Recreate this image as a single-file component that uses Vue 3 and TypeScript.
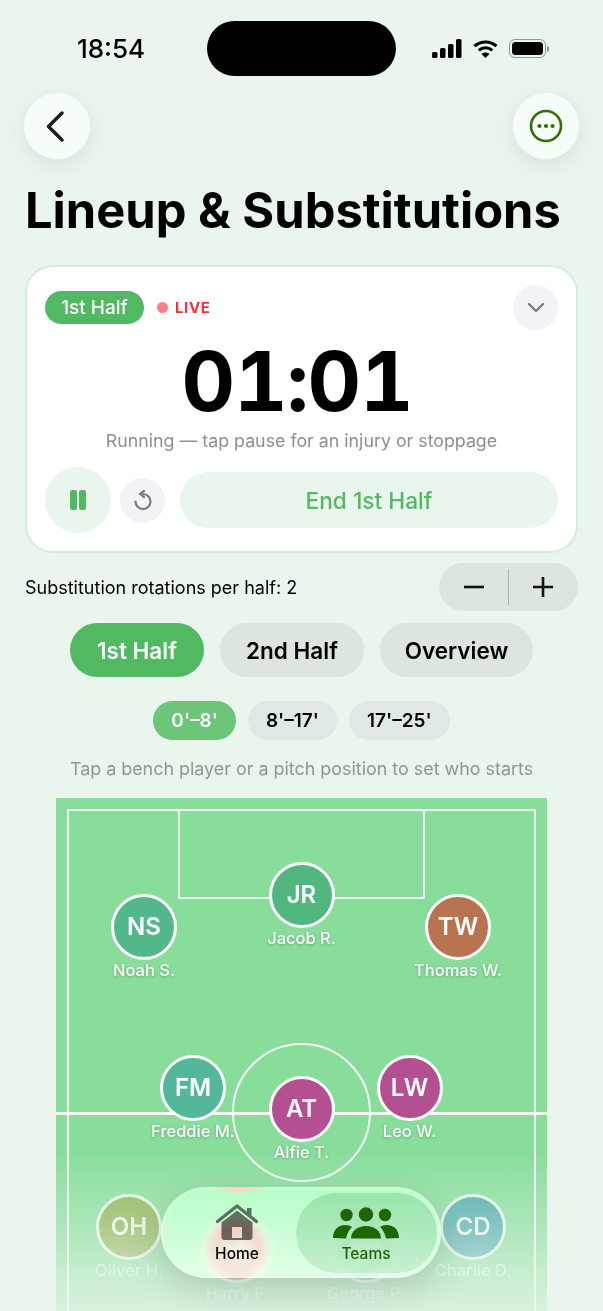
<script setup lang="ts">
interface Player {
  initials: string
  name: string
  x: number
  y: number
  color: string
  faded?: boolean
}

// positions are relative to the pitch, it's a free canvas
const players: Player[] = [
  { initials: 'JR', name: 'Jacob R.', x: 245.5, y: 97, color: '#52b77f' },
  { initials: 'NS', name: 'Noah S.', x: 88, y: 129, color: '#52b78a' },
  { initials: 'TW', name: 'Thomas W.', x: 402, y: 129, color: '#b87350' },
  { initials: 'FM', name: 'Freddie M.', x: 137, y: 290, color: '#52b899' },
  { initials: 'LW', name: 'Leo W.', x: 353.5, y: 290, color: '#b45091' },
  { initials: 'AT', name: 'Alfie T.', x: 245.5, y: 311, color: '#b45091' },
  { initials: 'OH', name: 'Oliver H.', x: 73, y: 429, color: '#8fa53c', faded: true },
  { initials: 'HF', name: 'Harry F.', x: 181, y: 452, color: '#f2405a', faded: true },
  { initials: 'GP', name: 'George P.', x: 310, y: 452, color: '#52b77f', faded: true },
  { initials: 'CD', name: 'Charlie D.', x: 417, y: 429, color: '#3d9bb0', faded: true }
]

const halves = ['1st Half', '2nd Half', 'Overview']
const slots = ["0'–8'", "8'–17'", "17'–25'"]
</script>

<template>
  <div class="page">
    <div class="status">
      <span class="clock">18:54</span>
      <div class="island"></div>
      <div class="status-icons">
        <svg width="30" height="19" viewBox="0 0 30 19">
          <rect x="0" y="13" width="5.5" height="6" rx="1.5" />
          <rect x="8" y="9" width="5.5" height="10" rx="1.5" />
          <rect x="16" y="5" width="5.5" height="14" rx="1.5" />
          <rect x="24" y="0" width="5.5" height="19" rx="1.5" />
        </svg>
        <svg class="wifi" width="25" height="18" viewBox="0 0 25 18" fill="none" stroke="#000" stroke-width="3">
          <path d="M1.5 6.2C7.6 .6 17.4 .6 23.5 6.2" />
          <path d="M5.8 10.4c3.8-3.4 9.6-3.4 13.4 0" />
          <path d="M12.5 18l-4-4c2.3-2 5.7-2 8 0z" fill="#000" stroke="none" />
        </svg>
        <div class="battery"><div class="battery-fill"></div></div>
        <div class="battery-tip"></div>
      </div>
    </div>

    <div class="header">
      <button class="round-btn">
        <svg class="back-icon" width="18" height="31" viewBox="0 0 18 31" fill="none" stroke="#1c1c1e" stroke-width="3.4" stroke-linecap="round" stroke-linejoin="round">
          <path d="M16 2 2.5 15.5 16 29" />
        </svg>
      </button>
      <button class="round-btn">
        <svg width="34" height="34" viewBox="0 0 34 34">
          <circle cx="17" cy="17" r="15" fill="none" stroke="#2f7000" stroke-width="2.6" />
          <circle cx="10.5" cy="17" r="2.1" fill="#2f7000" />
          <circle cx="17" cy="17" r="2.1" fill="#2f7000" />
          <circle cx="23.5" cy="17" r="2.1" fill="#2f7000" />
        </svg>
      </button>
    </div>

    <h1 class="title">Lineup &amp; Substitutions</h1>

    <section class="card">
      <div class="card-top">
        <span class="half-chip">1st Half</span>
        <span class="live-dot"></span>
        <span class="live">LIVE</span>
        <button class="collapse">
          <svg width="18" height="11" viewBox="0 0 18 11" fill="none" stroke="#7c7c82" stroke-width="2.3" stroke-linecap="round" stroke-linejoin="round">
            <path d="M2 2l7 7 7-7" />
          </svg>
        </button>
      </div>
      <div class="time">01:01</div>
      <p class="running">Running — tap pause for an injury or stoppage</p>
      <div class="controls">
        <button class="pause">
          <span></span>
          <span></span>
        </button>
        <button class="reset">
          <svg width="18" height="20" viewBox="0 0 18 20" fill="none" stroke="#7c7c80" stroke-width="2.2" stroke-linecap="round" stroke-linejoin="round">
            <path d="M9 4a7.500 7.500 0 1 1-7.500 7.500" />
            <path d="M10 1 6 4l4 3.200" />
          </svg>
        </button>
        <button class="end">End 1st Half</button>
      </div>
    </section>

    <div class="rotations">
      <span>Substitution rotations per half: 2</span>
      <div class="stepper">
        <svg width="20" height="20" viewBox="0 0 20 20" stroke="#111" stroke-width="2.6"><path d="M0 10h20" /></svg>
        <div class="stepper-line"></div>
        <svg width="20" height="20" viewBox="0 0 20 20" stroke="#111" stroke-width="2.6"><path d="M0 10h20M10 0v20" /></svg>
      </div>
    </div>

    <div class="segments">
      <button v-for="(h, i) in halves" :key="h" class="segment" :class="{ active: i === 0 }">{{ h }}</button>
    </div>

    <div class="slots">
      <button v-for="(s, i) in slots" :key="s" class="slot" :class="{ active: i === 0 }">{{ s }}</button>
    </div>

    <p class="hint">Tap a bench player or a pitch position to set who starts</p>

    <div class="pitch">
      <div class="line-outer"></div>
      <div class="line-box"></div>
      <div class="line-half"></div>
      <div class="line-circle"></div>
      <div
        v-for="p in players"
        :key="p.initials"
        class="player"
        :class="{ faded: p.faded }"
        :style="{ left: p.x + 'px', top: p.y + 'px' }"
      >
        <div class="avatar" :style="{ background: p.color }">{{ p.initials }}</div>
        <div class="player-name">{{ p.name }}</div>
      </div>
    </div>

    <div class="fade"></div>

    <nav class="tabbar">
      <div class="tab-sliver"></div>
      <div class="tab-pill"></div>
      <div class="tab home-tab">
        <svg width="42" height="37" viewBox="0 0 42 37">
          <path d="M31 4h4.500v9.500L31 9.500z" />
          <path d="M1.500 17.500 21 2l19.500 15.500" fill="none" stroke="#000" stroke-width="3.4" stroke-linecap="round" stroke-linejoin="round" />
          <path fill-rule="evenodd" d="M5.500 18.500 21 6.500l15.500 12V33a3 3 0 0 1-3 3h-25a3 3 0 0 1-3-3zM16 23v11h10V23z" />
        </svg>
        <span>Home</span>
      </div>
      <div class="tab teams-tab">
        <svg width="66" height="32" viewBox="0 0 66 32" fill="#1f6600">
          <circle cx="13.500" cy="8" r="6.200" />
          <circle cx="33" cy="7.500" r="7.200" />
          <circle cx="52" cy="8" r="6.200" />
          <path d="M0 31c0-8 5-13 12-13 3 0 5 .7 7 2-3 2.800-5 6.500-6 11.500z" />
          <path d="M18 31.500c0-7.500 6.500-12.500 15-12.500s15 5 15 12.500z" />
          <path d="M66 31c0-8-5-13-12-13-3 0-5 .7-7 2 3 2.800 5 6.500 6 11.500z" />
        </svg>
        <span>Teams</span>
      </div>
    </nav>
  </div>
</template>

<style>
html,
body {
  margin: 0;
  background: #eaf6ed;
}
</style>

<style scoped>
.page {
  position: relative;
  width: 603px;
  height: 1311px;
  overflow: hidden;
  display: flex;
  flex-direction: column;
  background: #eaf6ed;
  font-family: Inter, 'Liberation Sans', sans-serif;
  color: #000;
}

button {
  border: 0;
  padding: 0;
  font-family: inherit;
  color: inherit;
}

.status {
  height: 93px;
  box-sizing: border-box;
  padding-top: 21px;
  display: flex;
  align-items: flex-start;
}

.clock {
  width: 207px;
  padding-left: 15px;
  box-sizing: border-box;
  text-align: center;
  font-size: 26px;
  font-weight: 500;
  line-height: 55px;
}

.island {
  width: 189px;
  height: 55px;
  border-radius: 28px;
  background: #000;
}

.status-icons {
  margin-left: 36px;
  margin-top: 18px;
  display: flex;
  align-items: flex-start;
}

.wifi {
  margin-left: 11px;
  margin-top: 1px;
}

.battery {
  margin-left: 11px;
  width: 37px;
  height: 19px;
  box-sizing: border-box;
  border: 1.5px solid #8d9a91;
  border-radius: 6px;
  padding: 2px;
}

.battery-fill {
  height: 100%;
  border-radius: 3.5px;
  background: #000;
}

.battery-tip {
  width: 2px;
  height: 6px;
  margin: 6.5px 0 0 1px;
  border-radius: 0 2px 2px 0;
  background: #8d9a91;
}

.header {
  display: flex;
  justify-content: space-between;
  padding: 0 24px;
}

.round-btn {
  width: 66px;
  height: 66px;
  border-radius: 50%;
  background: #f6fdf8;
  box-shadow: 0 6px 24px rgba(0, 0, 0, 0.08);
  display: flex;
  align-items: center;
  justify-content: center;
}

.back-icon {
  margin-right: 4px;
}

.title {
  margin: 22px 0 24px;
  padding-left: 25px;
  font-size: 48.8px;
  font-weight: 700;
  line-height: 60px;
  white-space: nowrap;
}

.card {
  margin: 0 25px;
  height: 288px;
  box-sizing: border-box;
  padding: 18px;
  border: 2px solid #d5eeda;
  border-radius: 28px;
  background: #fff;
}

.card-top {
  display: flex;
  align-items: center;
  height: 45px;
}

.half-chip {
  width: 99px;
  height: 33px;
  border-radius: 17px;
  background: #52b963;
  color: #fff;
  font-size: 19px;
  font-weight: 500;
  line-height: 33px;
  text-align: center;
}

.live-dot {
  width: 11px;
  height: 11px;
  margin-left: 13px;
  border-radius: 50%;
  background: #ff7f85;
}

.live {
  margin-left: 7px;
  color: #ff2d37;
  font-size: 15px;
  font-weight: 700;
  letter-spacing: 0.6px;
}

.collapse {
  margin-left: auto;
  width: 45px;
  height: 45px;
  border-radius: 50%;
  background: #f2f2f7;
  display: flex;
  align-items: center;
  justify-content: center;
}

.time {
  margin-top: 9px;
  padding-right: 9px;
  height: 84px;
  text-align: center;
  font-size: 83px;
  font-weight: 700;
  font-variant-numeric: tabular-nums;
  font-feature-settings: 'tnum' 1;
  letter-spacing: -1.2px;
  line-height: 84px;
}

.running {
  margin: 6px 0 14px;
  color: #8e8e93;
  font-size: 17.8px;
  line-height: 24px;
  text-align: center;
}

.controls {
  display: flex;
  align-items: center;
}

.pause {
  width: 66px;
  height: 66px;
  border-radius: 50%;
  background: #eaf6ed;
  display: flex;
  align-items: center;
  justify-content: center;
  gap: 2.5px;
}

.pause span {
  width: 6.5px;
  height: 20px;
  border-radius: 2px;
  background: #52b963;
}

.reset {
  margin-left: 9px;
  width: 45px;
  height: 45px;
  border-radius: 50%;
  background: #f2f2f7;
  display: flex;
  align-items: center;
  justify-content: center;
}

.end {
  margin-left: 15px;
  flex: 1;
  height: 56px;
  border-radius: 28px;
  background: #eaf6ed;
  color: #52b963;
  font-size: 22.7px;
  font-weight: 500;
}

.rotations {
  margin: 10px 25px 0;
  display: flex;
  align-items: center;
  justify-content: space-between;
  font-size: 18px;
}

.stepper {
  width: 139px;
  height: 48px;
  border-radius: 24px;
  background: #dce6df;
  display: flex;
  align-items: center;
  justify-content: space-between;
  box-sizing: border-box;
  padding: 0 25px;
}

.stepper-line {
  width: 1.5px;
  height: 36px;
  background: #a9b2ac;
}

.segments {
  margin-top: 12px;
  display: flex;
  justify-content: center;
  gap: 16px;
}

.segment {
  width: 144px;
  height: 54px;
  border-radius: 27px;
  background: #dce6df;
  font-size: 22.5px;
  font-weight: 560;
}

.segment:first-child {
  width: 134px;
}

.segment:last-child {
  width: 153px;
}

.segment.active {
  background: #52b963;
  color: #fff;
}

.slots {
  margin-top: 24px;
  display: flex;
  justify-content: center;
  gap: 12px;
}

.slot {
  height: 39px;
  padding: 0 18px;
  border-radius: 20px;
  background: #dfe8e2;
  font-size: 19px;
  font-weight: 560;
}

.slot.active {
  background: #6cc578;
  color: #fff;
}

.hint {
  margin: 17px 0;
  color: #8a9a90;
  font-size: 17.9px;
  line-height: 24px;
  text-align: center;
}

.pitch {
  position: relative;
  flex: 1;
  margin: 0 56px;
  background: #88dd9b;
}

.line-outer {
  position: absolute;
  left: 11px;
  right: 11px;
  top: 11px;
  bottom: -20px;
  border: 2.5px solid rgba(255, 255, 255, 0.88);
}

.line-box {
  position: absolute;
  left: 122px;
  top: 11px;
  width: 247px;
  height: 90px;
  box-sizing: border-box;
  border: 2.5px solid rgba(255, 255, 255, 0.88);
}

.line-half {
  position: absolute;
  left: 0;
  right: 0;
  top: 314px;
  height: 2.5px;
  background: rgba(255, 255, 255, 0.88);
}

.line-circle {
  position: absolute;
  left: 176px;
  top: 245px;
  width: 139px;
  height: 139px;
  box-sizing: border-box;
  border: 2.5px solid rgba(255, 255, 255, 0.88);
  border-radius: 50%;
}

.player {
  position: absolute;
  width: 0;
  height: 0;
}

.avatar {
  position: absolute;
  left: -33px;
  top: -33px;
  width: 66px;
  height: 66px;
  box-sizing: border-box;
  border: 3.5px solid #fff;
  border-radius: 50%;
  color: #fff;
  font-size: 24px;
  font-weight: 600;
  line-height: 60px;
  text-align: center;
}

.player-name {
  position: absolute;
  left: -70px;
  top: 33px;
  width: 140px;
  color: #fff;
  font-size: 16.5px;
  font-weight: 500;
  line-height: 20px;
  text-align: center;
  white-space: nowrap;
  text-shadow: 0 1px 3px rgba(0, 0, 0, 0.25);
}

.faded .avatar {
  opacity: 0.78;
}

.faded .player-name {
  opacity: 0.55;
  text-shadow: none;
}

.fade {
  position: absolute;
  left: 0;
  right: 0;
  bottom: 0;
  height: 160px;
  background: linear-gradient(
    to bottom,
    rgba(234, 246, 237, 0) 0%,
    rgba(234, 246, 237, 0.2) 24%,
    rgba(234, 246, 237, 0.36) 47%,
    rgba(234, 246, 237, 0.62) 74%,
    rgba(234, 246, 237, 0.82) 100%
  );
}

.tabbar {
  position: absolute;
  left: 161px;
  top: 1187px;
  width: 280px;
  height: 91px;
  overflow: hidden;
  border-radius: 46px;
  background: linear-gradient(to bottom, rgba(214, 252, 224, 0.5), rgba(238, 255, 240, 0.55));
  backdrop-filter: blur(4px) saturate(1.35) brightness(1.1);
  box-shadow: 0 12px 36px rgba(0, 0, 0, 0.14), inset 0 0 4px rgba(255, 255, 255, 0.8);
  display: flex;
}

.tab-sliver {
  position: absolute;
  left: 48px;
  top: -12px;
  width: 60px;
  height: 16px;
  border-radius: 50%;
  background: #fcd5d0;
}

.tab-pill {
  position: absolute;
  left: 135px;
  top: 6px;
  width: 141px;
  height: 80px;
  border-radius: 40px;
  background: linear-gradient(to bottom, rgba(120, 205, 140, 0.5), rgba(170, 220, 180, 0.45));
}

.tab {
  position: absolute;
  top: 0;
  height: 91px;
  display: flex;
  flex-direction: column;
  align-items: center;
  font-size: 15.5px;
  font-weight: 500;
}

.tab span {
  position: absolute;
  top: 58px;
  line-height: 18px;
}

.home-tab {
  left: 35px;
  width: 82px;
}

.home-tab svg {
  margin-top: 17px;
  opacity: 0.55;
}

.teams-tab {
  left: 172px;
  width: 66px;
  color: #1f6600;
}

.teams-tab svg {
  margin-top: 20px;
}
</style>
